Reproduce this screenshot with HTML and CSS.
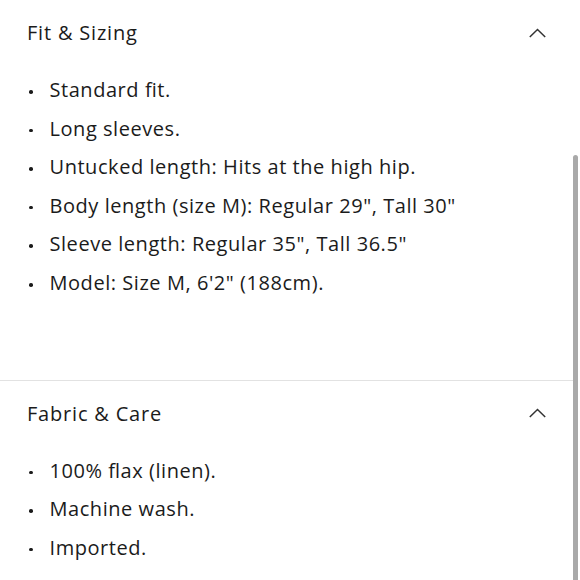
FILE: index.html
```html
<!DOCTYPE html>
<html>
<head>
<meta charset="utf-8">
<link rel="stylesheet" href="styles.css">
</head>
<body>
<div class="panel">
  <section class="section first">
    <div class="header">
      <h2 class="title">Fit &amp; Sizing</h2>
      <svg class="chevron" width="17" height="10" viewBox="0 0 17 10"><polyline points="0.8,9 8.5,1.5 16.2,9" fill="none" stroke="#333" stroke-width="1.5"/></svg>
    </div>
    <ul class="list">
      <li>Standard ﬁt.</li>
      <li>Long sleeves.</li>
      <li>Untucked length: Hits at the high hip.</li>
      <li>Body length (size M): Regular 29", Tall 30"</li>
      <li>Sleeve length: Regular 35", Tall 36.5"</li>
      <li>Model: Size M, 6'2" (188cm).</li>
    </ul>
  </section>
  <section class="section second">
    <div class="header">
      <h2 class="title">Fabric &amp; Care</h2>
      <svg class="chevron" width="17" height="10" viewBox="0 0 17 10"><polyline points="0.8,9 8.5,1.5 16.2,9" fill="none" stroke="#333" stroke-width="1.5"/></svg>
    </div>
    <ul class="list">
      <li>100% ﬂax (linen).</li>
      <li>Machine wash.</li>
      <li>Imported.</li>
    </ul>
  </section>
  <div class="scroll-thumb"></div>
</div>
</body>
</html>
```

FILE: styles.css
```css
html, body {
  margin: 0;
  padding: 0;
  background: #fff;
}
body {
  font-family: "Open Sans", "Noto Sans", sans-serif;
  color: #1b1b1b;
  overflow: hidden;
}
.panel {
  position: relative;
  width: 580px;
  height: 580px;
  overflow: hidden;
}
.section {
  padding: 0 29px 0 27px;
  margin-right: 5px;
}
.first {
  padding-bottom: 77px;
}
.second {
  border-top: 1px solid #e2e2e2;
}
.header {
  height: 66px;
  display: flex;
  align-items: center;
  justify-content: space-between;
}
.title {
  margin: 0;
  font-size: 20px;
  font-weight: 400;
  line-height: 26px;
  letter-spacing: 0.8px;
}
.chevron {
  display: block;
  margin-top: -1px;
}
.list {
  list-style: none;
  margin: 5px 0 0 0;
  padding: 0;
}
.list li {
  display: flex;
  align-items: center;
  font-size: 20px;
  line-height: 38.6px;
  height: 38.6px;
  white-space: nowrap;
  letter-spacing: 0.55px;
}
.list li::before {
  content: "";
  width: 3.5px;
  height: 3.5px;
  border-radius: 50%;
  background: #1b1b1b;
  margin: 3px 17px 0 2px;
  flex: none;
}
.scroll-thumb {
  position: absolute;
  right: 2px;
  top: 155px;
  width: 5px;
  height: 430px;
  border-radius: 3px;
  background: #a9a9a9;
}
```
